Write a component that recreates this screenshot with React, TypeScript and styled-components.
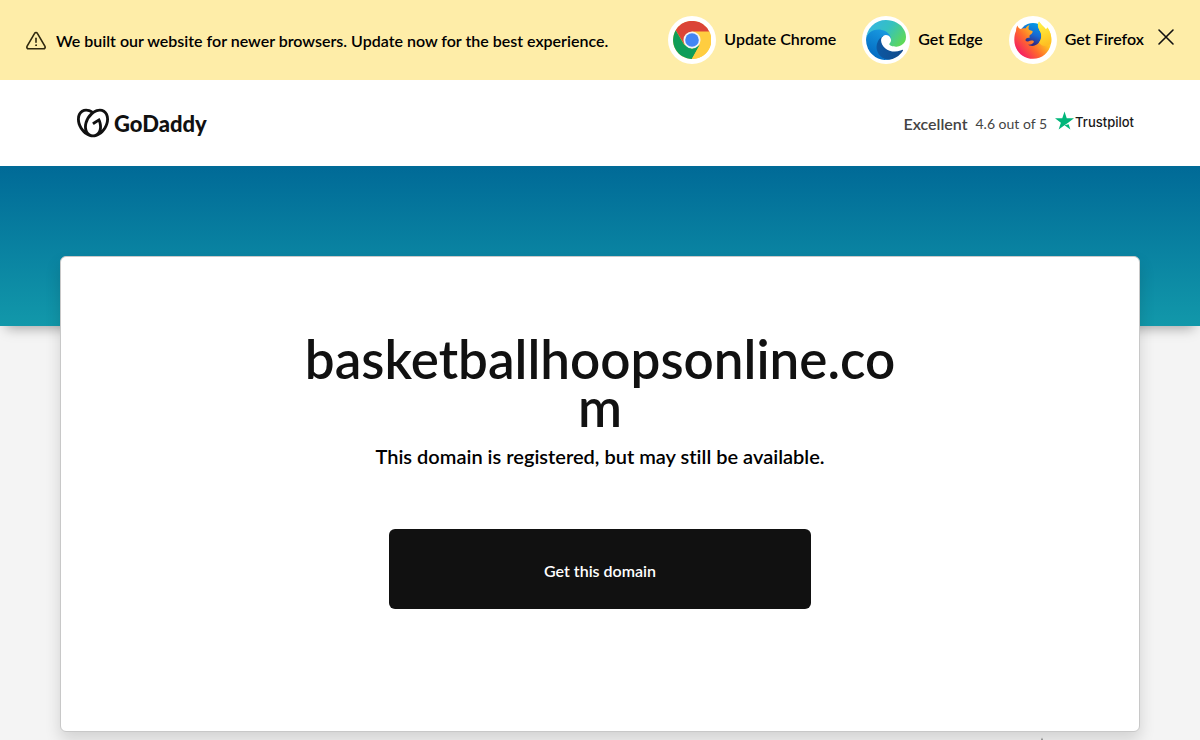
import React from "react";
import styled, { createGlobalStyle } from "styled-components";
import { SiGodaddy, SiTrustpilot } from "react-icons/si";

const GlobalStyle = createGlobalStyle`
  *, *::before, *::after { box-sizing: border-box; }
  body {
    margin: 0;
    background: #f4f4f4;
    color: #111;
    font-family: "Lato", "Liberation Sans", sans-serif;
    font-size: 16px;
    font-variant-ligatures: none;
    line-height: 24px;
  }
`;

const Banner = styled.aside`
  display: flex;
  align-items: center;
  justify-content: space-between;
  min-height: 80px;
  padding: 0 24px;
  background: #feeda8;
  font-weight: 600;
  color: #000;
`;

const Notice = styled.p`
  display: flex;
  align-items: center;
  gap: 8px;
  margin: 0;
  padding-top: 2px;
`;

const BrowserList = styled.nav`
  display: flex;
  align-items: center;
  gap: 26px;
`;

const BrowserLink = styled.a`
  display: flex;
  align-items: center;
  gap: 8px;
  color: #000;
  text-decoration: none;
`;

const BrowserLabel = styled.span`
  padding-bottom: 2px;
`;

const BrowserIcon = styled.span`
  display: flex;
  align-items: center;
  justify-content: center;
  width: 48px;
  height: 48px;
  border-radius: 50%;
  background: #fff;
`;

const Actions = styled.div`
  display: flex;
  align-items: center;
  gap: 12px;
`;

const CloseButton = styled.button`
  display: flex;
  margin: 0;
  padding: 0 0 6px;
  border: 0;
  background: none;
  color: #111;
  cursor: pointer;
`;

const Header = styled.header`
  display: flex;
  align-items: center;
  justify-content: space-between;
  min-height: 86px;
  padding: 0 66px 0 77px;
  background: #fff;
`;

const Brand = styled.a`
  display: flex;
  align-items: center;
  gap: 5px;
  color: #111;
  font-size: 22px;
  font-weight: 900;
  text-decoration: none;
`;

const BrandName = styled.span`
  padding-top: 2px;
`;

const Rating = styled.a`
  display: flex;
  align-items: center;
  gap: 8px;
  padding-top: 2px;
  color: #444;
  font-size: 14px;
  text-decoration: none;
`;

const RatingWord = styled.span`
  font-size: 16px;
  font-weight: 600;
`;

const Trustpilot = styled.span`
  display: flex;
  align-items: center;
  gap: 1px;
  padding-bottom: 4px;
  color: #191919;
  font-family: "Inter", "Liberation Sans", sans-serif;
  font-size: 13px;
  font-weight: 500;

  svg {
    margin-bottom: 4px;
  }
`;

const Hero = styled.div`
  height: 160px;
  background: linear-gradient(#006a97, #1298aa);
  box-shadow: 0 8px 12px -6px rgba(0, 0, 0, 0.35);
`;

const Card = styled.main`
  position: relative;
  display: flex;
  flex-direction: column;
  align-items: center;
  margin: -70px 60px 0;
  padding: 78px 24px 122px;
  border: 1px solid #c8c8c8;
  border-radius: 6px;
  background: #fff;
  box-shadow: 0 8px 16px rgba(0, 0, 0, 0.14);
  text-align: center;
`;

const DomainName = styled.h1`
  max-width: 600px;
  margin: 0;
  font-size: 53px;
  font-weight: 600;
  line-height: 48px;
  overflow-wrap: anywhere;
`;

const Status = styled.p`
  margin: 11px 0 0;
  color: #000;
  font-size: 20px;
  font-weight: 600;
  line-height: 28px;
`;

const PrimaryButton = styled.button`
  width: 422px;
  max-width: 100%;
  height: 80px;
  margin: 59px 0 0;
  padding-top: 4px;
  border: 0;
  border-radius: 6px;
  background: #111;
  color: #fff;
  font: inherit;
  font-weight: 600;
  cursor: pointer;
`;

const Footer = styled.footer`
  display: flex;
  justify-content: flex-end;
  padding: 5px 148px 24px;
`;

const WarningIcon = () => (
  <svg width="24" height="24" viewBox="0 0 24 24" fill="none" stroke="#30290f" strokeWidth="1.6" strokeLinecap="round" strokeLinejoin="round" aria-hidden="true">
    <path d="M10.6 4.3 3 17.3a1.7 1.7 0 0 0 1.5 2.5h15a1.7 1.7 0 0 0 1.5-2.5L13.4 4.3a1.6 1.6 0 0 0-2.8 0Z" />
    <path d="M12 9.2v4" />
    <circle cx="12" cy="16.2" r=".5" fill="#30290f" strokeWidth="1" />
  </svg>
);

const ChromeIcon = () => (
  <svg width="38" height="38" viewBox="0 0 48 48" aria-hidden="true">
    <circle cx="24" cy="24" r="24" fill="#ffcd40" />
    <path d="M24 24 34.4 14H46A24 24 0 0 0 3.4 11.8L14 29Z" fill="#db4437" />
    <path d="M3.4 11.8A24 24 0 0 0 23.8 48L34 30 24 35 14 29.8Z" fill="#0f9d58" />
    <path d="M24 13.2h22A24 24 0 0 1 23.8 48l10-18Z" fill="#ffcd40" />
    <circle cx="24" cy="24" r="10.8" fill="#f4f4f4" />
    <circle cx="24" cy="24" r="8.6" fill="#4285f4" />
  </svg>
);

const EdgeIcon = () => (
  <svg width="40" height="40" viewBox="0 0 256 256" aria-hidden="true">
    <defs>
      <linearGradient id="edgeDeep" x1="0" x2="1"><stop offset="0" stopColor="#0c59a4" /><stop offset="1" stopColor="#114a8b" /></linearGradient>
      <linearGradient id="edgeBlue" x1=".7" y1="0" x2=".3" y2="1"><stop offset="0" stopColor="#1b9de2" /><stop offset="1" stopColor="#0067c0" /></linearGradient>
      <linearGradient id="edgeGreen" x1="0" y1=".2" x2="1" y2=".7"><stop offset="0" stopColor="#35b4e5" /><stop offset=".5" stopColor="#35c1c0" /><stop offset="1" stopColor="#5fd956" /></linearGradient>
    </defs>
    <path fill="url(#edgeDeep)" d="M231.07 190.54c-3.38 1.76-6.86 3.3-10.44 4.63a101.3 101.3 0 0 1-35.9 6.46c-47.32 0-88.54-32.55-88.54-74.32a31.48 31.48 0 0 1 16.43-27.31c-42.8 1.8-53.8 46.4-53.8 72.53 0 73.88 68.09 81.37 82.76 81.37 7.91 0 19.84-2.3 27-4.56l1.31-.44a128.34 128.34 0 0 0 66.6-52.8 4 4 0 0 0-5.42-5.56z" />
    <path fill="url(#edgeBlue)" d="M105.73 241.42a79.2 79.2 0 0 1-22.74-21.34 80.72 80.72 0 0 1 29.53-120c3.16-1.5 8.5-4.1 15.64-4a32.37 32.37 0 0 1 25.69 13 31.88 31.88 0 0 1 6.36 18.66c0-.21 24.46-79.6-80-79.6-43.9 0-80 41.66-80 78.21a130.15 130.15 0 0 0 12.11 56 128 128 0 0 0 156.38 67.11 75.55 75.55 0 0 1-62.78-8z" />
    <path fill="url(#edgeGreen)" d="M152.33 148.86c-.81 1.05-3.3 2.5-3.3 5.66 0 2.61 1.7 5.12 4.72 7.23 14.38 10 41.49 8.68 41.56 8.68a59.56 59.56 0 0 0 30.27-8.35 61.38 61.38 0 0 0 30.43-52.88c.26-22.41-8-37.31-11.34-43.91C223.46 23.84 177.72 0 128 0A128 128 0 0 0 0 126.2c.48-36.54 36.8-66.05 80-66.05 3.5 0 23.46.34 42 10.07 16.34 8.58 24.9 18.94 30.85 29.21 6.18 10.67 7.28 24.15 7.28 29.52s-2.74 13.33-7.8 19.91z" />
  </svg>
);

const FirefoxIcon = () => (
  <svg width="40" height="40" viewBox="0 0 40 40" aria-hidden="true">
    <defs>
      <linearGradient id="foxGlobe" x1=".8" y1="0" x2=".4" y2="1"><stop offset="0" stopColor="#00a5e8" /><stop offset=".45" stopColor="#1769d2" /><stop offset=".75" stopColor="#312a85" /></linearGradient>
      <linearGradient id="foxBody" x1=".9" y1=".1" x2=".1" y2=".8"><stop offset="0" stopColor="#fff04a" /><stop offset=".35" stopColor="#ffbd22" /><stop offset=".65" stopColor="#ff6b2d" /><stop offset="1" stopColor="#f51f62" /></linearGradient>
      <linearGradient id="foxTail" x1=".3" y1="0" x2=".5" y2="1"><stop offset="0" stopColor="#fff24a" /><stop offset=".6" stopColor="#ffd52c" /><stop offset="1" stopColor="#ffbd22" /></linearGradient>
    </defs>
    <circle cx="20" cy="17" r="14" fill="url(#foxGlobe)" />
    <path fill="url(#foxBody)" d="M3 11C3 9 3.5 7 4.5 5.5 5 7.5 6 8.5 7.5 9 10 8 11.5 8.200 12.500 8.600 13.500 6.500 15 5.500 16.500 5.200 15.300 6.800 15.200 8.500 16 9.800 17.500 10.700 18.500 10.700 19.500 11 20 13 18.500 14 16.500 15.400L16.500 18C14 17.500 12.500 18.500 12.500 20.500 14 22.500 16 21 18 20.500 20.500 20.300 21.500 21.500 20.500 22.500 19 24.500 16.500 25 14.500 24.500 17.500 26.700 23 26.500 26 22.500 29 18.500 28.500 13 26.500 10.500L25.500 8C24.500 6 25 3.500 26 1.500 28 5 31 6.500 33 9.500L34.500 7.500C38 12.500 39 18.500 38 23.500 36 33 29 38.800 20 38.800 9 38.800 1.300 30 1.300 20 1.300 16 2 13 3 11Z" />
    <path fill="url(#foxTail)" d="M26 1.500C24.500 4 24.600 6 25.500 8L26.500 10.500C29.500 14 29 19 26 22.500 29 27 34 27 38 23.500 39 18.500 38 12.500 34.500 7.500L33 9.500C31 6.500 28 5 26 1.500Z" />
  </svg>
);

const CloseIcon = () => (
  <svg width="20" height="20" viewBox="0 0 20 20" fill="none" stroke="currentColor" strokeWidth="1.6" strokeLinecap="round" aria-hidden="true">
    <path d="m3 3 14 14M17 3 3 17" />
  </svg>
);

const browsers = [
  { label: "Update Chrome", Icon: ChromeIcon },
  { label: "Get Edge", Icon: EdgeIcon },
  { label: "Get Firefox", Icon: FirefoxIcon },
];

export default function App() {
  return (
    <>
      <GlobalStyle />
      <Banner>
        <Notice>
          <WarningIcon />
          We built our website for newer browsers. Update now for the best experience.
        </Notice>
        <Actions>
          <BrowserList>
            {browsers.map(({ label, Icon }) => (
              <BrowserLink href="#" key={label}>
                <BrowserIcon><Icon /></BrowserIcon>
                <BrowserLabel>{label}</BrowserLabel>
              </BrowserLink>
            ))}
          </BrowserList>
          <CloseButton type="button" aria-label="Close"><CloseIcon /></CloseButton>
        </Actions>
      </Banner>
      <Header>
        <Brand href="#">
          <SiGodaddy size={32} aria-hidden="true" />
          <BrandName>GoDaddy</BrandName>
        </Brand>
        <Rating href="#">
          <RatingWord>Excellent</RatingWord>
          4.6 out of 5
          <Trustpilot><SiTrustpilot size={19} color="#00b67a" aria-hidden="true" />Trustpilot</Trustpilot>
        </Rating>
      </Header>
      <Hero />
      <Card>
        <DomainName>basketballhoopsonline.com</DomainName>
        <Status>This domain is registered, but may still be available.</Status>
        <PrimaryButton type="button">Get this domain</PrimaryButton>
      </Card>
      <Footer>
        <SiTrustpilot size={20} color="#777" aria-hidden="true" />
      </Footer>
    </>
  );
}
